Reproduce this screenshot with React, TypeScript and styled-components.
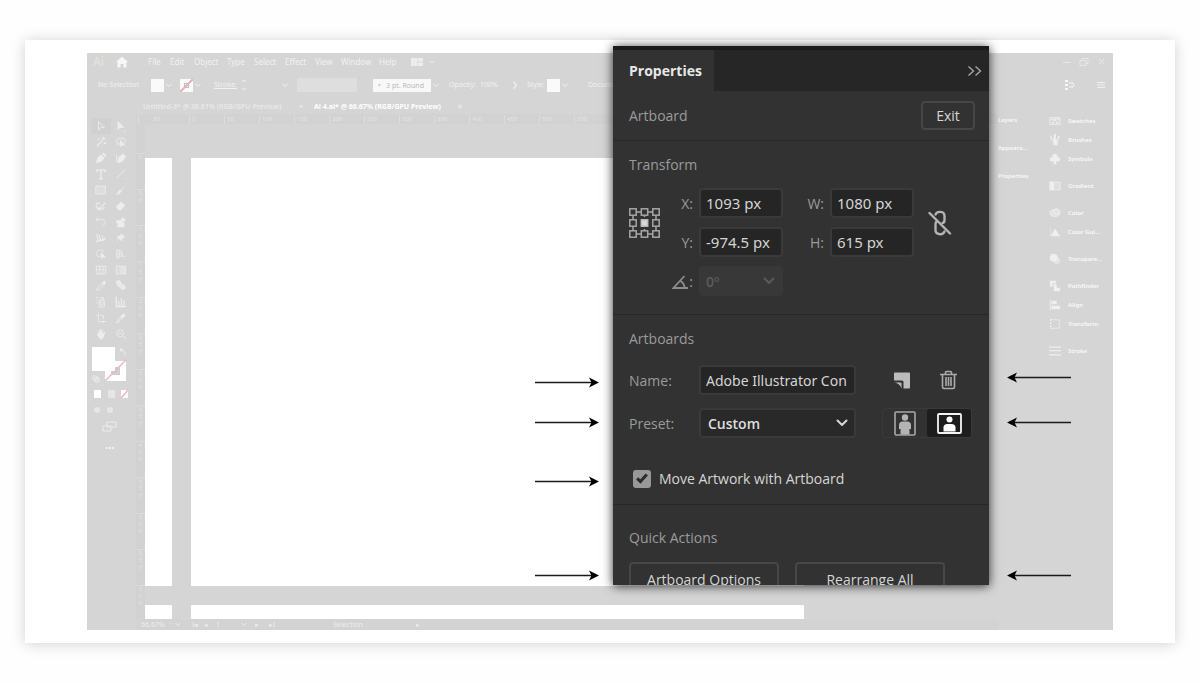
import React from "react";
import styled, { createGlobalStyle } from "styled-components";

const ui = '"Noto Sans", "Open Sans", sans-serif';
const panelFont = '"Open Sans", "Noto Sans", sans-serif';

const GlobalStyle = createGlobalStyle`
  *, *::before, *::after { box-sizing: border-box; }
  body { margin: 0; background: #fefefe; font-family: ${ui}; }
  button, input, select { font-family: inherit; margin: 0; }
`;

const Page = styled.main`
  padding: 40px 25px;
`;

const Card = styled.section`
  position: relative;
  padding: 13px 62px;
  background: #fff;
  box-shadow: 0 1px 14px rgba(0, 0, 0, 0.18);
`;

/* ---------- Faded application window ---------- */

const AppWindow = styled.div`
  display: flex;
  flex-direction: column;
  overflow: hidden;
  background: #d5d5d5;
  color: #f1f1f1;
  font-size: 8px;
  line-height: 10px;
  white-space: nowrap;
`;

const MenuBar = styled.nav`
  display: flex;
  align-items: center;
  height: 18px;
  padding: 0 6px;
`;

const Logo = styled.span`
  width: 23px;
  color: #e6e1da;
  font-size: 12px;
  font-weight: 500;
`;

const HomeSlot = styled.span`
  display: flex;
  width: 30px;
`;

const MenuItem = styled.a<{ $w: number }>`
  width: ${(p) => p.$w}px;
  padding-left: 2px;
  color: inherit;
  text-decoration: none;
`;

const Spacer = styled.span`
  flex: 1;
`;

const ControlBar = styled.div`
  display: grid;
  grid-template-columns: 53px 15px 14px 15px 19px 27px 41px 15px 76px 60px 16px 31px 32px 15px 20px 15px 26px 1fr 32px 16px;
  align-items: center;
  height: 28px;
  padding-left: 11px;
  font-size: 7px;
`;

const Swatch = styled.span`
  width: 13px;
  height: 13px;
  background: #fafafa;
`;

const NoneSwatch = styled(Swatch)`
  display: grid;
  place-items: center;
  background: linear-gradient(135deg, #fafafa 45%, #e9b3bb 45%, #e9b3bb 55%, #fafafa 55%);

  &::after {
    content: "";
    width: 5px;
    height: 5px;
    border: 1px solid #c9bcbe;
  }
`;

const FieldBlank = styled.span`
  width: 60px;
  height: 14px;
  background: #dedede;
`;

const BrushField = styled.span`
  width: 58px;
  height: 13px;
  padding-left: 5px;
  background: #f8f8f8;
  color: #b9b9b9;
  line-height: 13px;
`;

const Underlined = styled.span`
  text-decoration: underline;
`;

const TabsRow = styled.div`
  display: flex;
  align-items: center;
  gap: 11px;
  height: 15px;
  padding-left: 56px;
  font-size: 7px;
`;

const DocTab = styled.span<{ $active?: boolean }>`
  width: ${(p) => (p.$active ? 132 : 145)}px;
  color: ${(p) => (p.$active ? "#fff" : "#e9e9e9")};
  font-weight: ${(p) => (p.$active ? 700 : 600)};
`;

const Workspace = styled.div`
  display: flex;
`;

const ToolColumn = styled.aside`
  width: 49px;
  padding: 4px 4px 0;
`;

const ToolGrid = styled.div`
  display: grid;
  grid-template-columns: 20px 20px;
`;

const ToolButton = styled.button<{ $active?: boolean }>`
  display: flex;
  align-items: center;
  justify-content: center;
  height: 16px;
  padding: 0;
  border: 0;
  color: #ededed;
  background: ${(p) => (p.$active ? "#d0d0d0" : "none")};
`;

const ColourStack = styled.svg`
  display: block;
  margin-top: 4px;
`;

const DocumentArea = styled.div`
  flex: 1;
  min-width: 0;
`;

const HRuler = styled.div`
  display: flex;
  height: 10px;
  padding: 1px 0 0 2px;
  background: #d2d2d2;
  color: #e4e4e4;
  font-size: 6px;
  line-height: 8px;
  overflow: hidden;
`;

const HTick = styled.span<{ $first?: boolean }>`
  flex: none;
  width: ${(p) => (p.$first ? 51 : 35)}px;
  padding-left: ${(p) => (p.$first ? 14 : 2)}px;
  border-left: 1px solid #dcdcdc;
`;

const CanvasRow = styled.div`
  display: flex;
`;

const VRuler = styled.div`
  width: 9px;
  height: 495px;
  padding-top: 29px;
  overflow: hidden;
  background: #d2d2d2;
  color: #e2e2e2;
  font-size: 6px;
  line-height: 7px;
  text-align: center;
`;

const VTick = styled.div`
  height: 36px;
  border-top: 1px solid #dadada;
`;

const Canvas = styled.div`
  flex: 1;
  min-width: 0;
  display: grid;
  grid-template-columns: 27px minmax(0, 613px);
  grid-template-rows: 428px 14px;
  gap: 19px;
  align-content: start;
  padding-top: 34px;
`;

const Artboard = styled.div`
  background: #fff;
`;

const StatusBar = styled.div`
  display: grid;
  grid-template-columns: 34px 17px 12px 12px 25px 14px 14px 64px 83px 1fr;
  align-items: center;
  height: 11px;
  padding-left: 5px;
  background: #d3d3d3;
  color: #ededed;
  font-size: 7px;
`;

const DockLabels = styled.div`
  display: flex;
  flex-direction: column;
  gap: 18px;
  width: 47px;
  padding-top: 1px;
`;

const DockList = styled.div`
  display: flex;
  flex-direction: column;
  gap: 17px;
  width: 68px;
  padding-top: 2px;
`;

const DockGroup = styled.div`
  display: flex;
  flex-direction: column;
  gap: 9px;
`;

const DockItem = styled.div`
  display: flex;
  align-items: center;
  gap: 6px;
  height: 10px;
  color: #fafafa;
  font-size: 6px;
  font-weight: 600;
`;

const IconSlot = styled.span`
  display: flex;
  justify-content: center;
  width: 14px;
  margin-left: 3px;
  color: #efefef;
`;

/* ---------- Properties panel ---------- */

const PanelAnchor = styled.div`
  position: absolute;
  top: 6px;
  right: 186px;
  width: 376px;
`;

const Panel = styled.section`
  border-top: 4px solid #1b1b1b;
  background: #323232;
  box-shadow: 0 1px 10px rgba(0, 0, 0, 0.8);
  color: #d6d6d6;
  font-family: ${panelFont};
  font-size: 14px;
  line-height: 20px;
`;

const PanelTabs = styled.div`
  display: flex;
  align-items: stretch;
  height: 41px;
  background: #262626;
`;

const PanelTab = styled.button`
  width: 101px;
  padding: 0 0 0 16px;
  border: 0;
  background: #323232;
  color: #e8e8e8;
  font-family: "Open Sans", sans-serif;
  font-size: 14px;
  font-weight: 700;
  text-align: left;
`;

const CollapseButton = styled.button`
  display: flex;
  align-items: center;
  margin-left: auto;
  padding: 0 7px;
  border: 0;
  background: none;
  color: #a5a5a5;
`;

const PanelHeader = styled.header`
  display: flex;
  align-items: center;
  justify-content: space-between;
  height: 49px;
  padding: 0 14px 0 16px;
`;

const Heading = styled.h2`
  margin: 0;
  color: #9b9b9b;
  font-size: 14px;
  font-weight: 500;
  line-height: 20px;
`;

const OutlineButton = styled.button<{ $w: number; $h: number }>`
  flex: none;
  width: ${(p) => p.$w}px;
  height: ${(p) => p.$h}px;
  padding: 0;
  border: 2px solid #474747;
  border-radius: 4px;
  background: none;
  color: #d6d6d6;
  font-size: 14px;
  font-weight: 500;
`;

const Section = styled.section<{ $top?: number; $bottom?: number }>`
  padding: ${(p) => p.$top ?? 14}px 15px ${(p) => p.$bottom ?? 0}px 16px;
  border-top: 1px solid #272727;
`;

const TransformGrid = styled.div`
  display: grid;
  grid-template-columns: 31px 39px 84px 47px 84px 1fr;
  grid-auto-rows: 30px;
  row-gap: 9px;
  margin-top: 13px;
`;

const FieldLabel = styled.label`
  display: flex;
  align-items: center;
  justify-content: flex-end;
  padding: 2px 6px 0 0;
  color: #9b9b9b;
  font-weight: 500;
`;

const TextField = styled.input<{ $wide?: boolean }>`
  width: 100%;
  height: 30px;
  padding: 0 5px;
  border: 2px solid #3a3a3a;
  border-radius: 4px;
  background: #252525;
  color: #d4d4d4;
  font-family: ${ui};
  font-size: ${(p) => (p.$wide ? 14 : 15)}px;
`;

const TwoRows = styled.div<{ $end?: boolean }>`
  grid-row: 1 / span 2;
  grid-column: ${(p) => (p.$end ? 6 : 1)};
  display: flex;
  align-items: center;
  padding-left: ${(p) => (p.$end ? 14 : 0)}px;
`;

const SelectWrap = styled.div`
  position: relative;
  display: flex;
  width: 100%;

  svg {
    position: absolute;
    top: 11px;
    right: 8px;
    pointer-events: none;
  }
`;

const Select = styled.select`
  appearance: none;
  width: 100%;
  height: 30px;
  padding: 0 7px;
  border: 2px solid #3a3a3a;
  border-radius: 4px;
  background: #292929;
  color: #dedede;
  font-size: 14px;
  font-weight: 600;

  &:disabled {
    padding: 0 5px;
    border-color: #383838;
    background: #383838;
    color: #5b5b5b;
    opacity: 1;
  }
`;

const ArtboardGrid = styled.div`
  display: grid;
  grid-template-columns: 70px 157px 26px 90px;
  grid-auto-rows: 30px;
  row-gap: 13px;
  margin-top: 16px;
`;

const RowLabel = styled.label`
  display: flex;
  align-items: center;
  padding-top: 2px;
  color: #9b9b9b;
  font-weight: 500;
`;

const IconButton = styled.button<{ $active?: boolean }>`
  display: flex;
  align-items: center;
  justify-content: center;
  width: 40px;
  height: 28px;
  padding: 0;
  border: 0;
  border-radius: 3px;
  background: ${(p) => (p.$active ? "#1d1d1d" : "none")};
`;

const Actions = styled.div`
  grid-column: 4;
  display: flex;
  align-items: center;
  gap: 6px;
`;

const Orientation = styled(Actions)`
  gap: 0;
  border: 1px solid #3a3a3a;
  border-radius: 4px;

  ${IconButton} { width: 44px; }
`;

const CheckRow = styled.label`
  display: flex;
  align-items: center;
  gap: 8px;
  height: 20px;
  margin: 31px 0 1px 4px;
  font-weight: 500;
`;

const Checkbox = styled.input`
  appearance: none;
  display: grid;
  place-items: center;
  width: 18px;
  height: 18px;
  margin: 0;
  border-radius: 3px;
  background: #989898;

  &:checked::after {
    content: "";
    width: 6px;
    height: 11px;
    margin-bottom: 3px;
    border: solid #2b2b2b;
    border-width: 0 3px 3px 0;
    transform: rotate(42deg);
  }
`;

const QuickRow = styled.div`
  display: flex;
  gap: 16px;
  height: 23px;
  margin-top: 14px;
  overflow: hidden;
`;

const Pointer = styled.svg<{ $y: number; $right?: boolean }>`
  position: absolute;
  top: ${(p) => p.$y}px;
  left: ${(p) => (p.$right ? 393 : -79)}px;
`;

/* ---------- Drawings ---------- */

const Chevron = ({ w = 6, color = "currentColor", sw = 1 }: { w?: number; color?: string; sw?: number }) => (
  <svg width={w} height={w / 2 + 2} viewBox="0 0 12 8" fill="none" stroke={color} strokeWidth={(sw * 12) / w} strokeLinecap="round" strokeLinejoin="round">
    <path d="M1.5 1.5 6 6l4.500-4.500" />
  </svg>
);

const Glyph = ({ children, size = 14 }: { children: React.ReactNode; size?: number }) => (
  <svg width={size} height={size} viewBox="0 0 14 14" fill="none" stroke="currentColor" strokeWidth="1">
    {children}
  </svg>
);

const solid = { fill: "currentColor", stroke: "none" };

const tools: { name: string; art: React.ReactNode }[] = [
  { name: "Selection", art: <path d="M4 2v10l2.500-3H11z" /> },
  { name: "Direct selection", art: <path {...solid} d="M3 1v11l3-3h5zM12 12v2h-2z" /> },
  { name: "Magic wand", art: <path d="m2 12 7-7M10 1v3M8 3h4M4 3v2M3 4h2M11 7v3M10 8h3" strokeWidth="1.400" /> },
  { name: "Lasso", art: <><ellipse cx="7" cy="6" rx="5" ry="3.500" /><path {...solid} d="M6 4v9l2-2h4zM3 8l2 1-2 3z" /></> },
  { name: "Pen", art: <path {...solid} d="m1 13 2-7 4-3 4 4-3 4zM8 2l2-1 3 3-1 2z" /> },
  { name: "Curvature", art: <path {...solid} d="m3 13 1-7 5-4 4 3-4 6zM1 3c1 3 0 6 1 9l1-1C2 8 3 5 2 3z" /> },
  { name: "Type", art: <path d="M2 5V2.500h10V5M7 3v9.500M5 12.500h4" strokeWidth="1.600" /> },
  { name: "Line", art: <path d="m2 12 10-10M12 13l1.500-1.500" /> },
  { name: "Rectangle", art: <rect x="1" y="2.500" width="11" height="9" fill="#dcdcdc" /> },
  { name: "Paintbrush", art: <path {...solid} d="m13 1-6 6 1 1zM13 1 8 9 6 7zM6 7c-3 0-2 4-5 5 4 1 6-1 6-4z" /> },
  { name: "Shaper", art: <path d="M12 3 6 10l-2 1 1-3M6 4C1 2 0 7 3 10c3 2 7 1 8-2" strokeWidth="1.300" /> },
  { name: "Eraser", art: <path {...solid} d="m1 8 6-6 5 4-5 6H4z" /> },
  { name: "Rotate", art: <path d="M2 4h6c6 1 4 8 0 7M4 1 1 4l3 2" /> },
  { name: "Scale", art: <path {...solid} d="M2 5h5V3l2-2v2h3v3H9l2 2v5H3V8H1z" /> },
  { name: "Width", art: <path d="M2 2c0 5 2 5 2 9M5 3c0 5 2 4 2 8M1 12c3-5 9 1 11-5M9 4v5" strokeWidth="1.300" /> },
  { name: "Free transform", art: <path {...solid} d="m7 2 5 4-3 1-1 4-3-3-4 4 3-5-2-2 4-1z" /> },
  { name: "Shape builder", art: <><path d="M8 8c-4 4-8 1-6-3 2-4 8-3 8 0" /><path {...solid} d="M7 5v8l2-2h4z" /></> },
  { name: "Perspective", art: <path d="M2 2v10l6-3V4zM5 2.500v8M2 7h6M8 9l4 1" /> },
  { name: "Mesh", art: <path d="M1.500 2.500h11v9h-11zM1.500 7C5 4 9 9 12.500 7M5 2.500C7 6 4 8 5 11.500M9 2.500c2 3-1 6 0 9" /> },
  { name: "Gradient", art: <><path {...solid} opacity=".3" d="M2 3h4v8H2z" /><path d="M1.500 2.500h11v9h-11z" /><path {...solid} d="M6 3h6v8H6z" opacity=".6" /></> },
  { name: "Eyedropper", art: <><path d="m2 12 1-3 5-5 2 2-5 5z" /><path {...solid} d="m8 3 3-2 2 2-2 3z" /></> },
  { name: "Blend", art: <path {...solid} d="M1 3a3 3 0 0 1 6 0l5 4c2 3-2 6-4 4L2 6z" opacity=".8" /> },
  { name: "Symbol sprayer", art: <><rect x="5" y="5" width="6" height="8" rx="1" /><circle cx="8" cy="9" r="2" /><path d="M7 5V2h3v3M1 2h3M2 5h2M1 8h2" /></> },
  { name: "Column graph", art: <path d="M1.500 1v11.500H13M4.500 12V6M7.500 12V3M10.500 12V5" strokeWidth="1.500" /> },
  { name: "Artboard", art: <path d="M4 1v10h9M1 4h3M6 4h4v4M10 10v3" /> },
  { name: "Slice", art: <><path d="m2 13 2-5 6-6 2 2-6 6z" /><path {...solid} d="m6 6 4-4 2 2-4 4z" /></> },
  { name: "Hand", art: <path {...solid} d="M2 6l2 1V3l1-1 1 4V1h1l1 5V2h1v5l2-3 1 1-2 6-2 2H6L3 9z" /> },
  { name: "Zoom", art: <><circle cx="6" cy="6" r="4" /><path d="m9 9 4 4M4 6h4" /></> },
];

const dockArt: Record<string, React.ReactNode> = {
  Swatches: <><path d="M1 3h12v8H1z" /><path {...solid} d="M2 4h2v2H2zM5 4h3v3H5zM9 4h3v2H9zM3 8h3v2H3zM8 8h3v2H8z" /></>,
  Brushes: <path {...solid} d="M1 2l2 1 1 4h1L6 0h2v7h1l2-5 2 1-3 5v5H5V9L2 6z" />,
  Symbols: <path {...solid} d="M7 1a3 3 0 0 1 3 4c4-1 4 5 0 5-1 0-2-1-2-1l1 4H5l1-4c-2 2-5 1-5-1 0-3 2-3 3-3-1-2 1-4 3-4z" />,
  Gradient: <><path d="M1 2.500h12v9H1z" fill="#dedede" /><path {...solid} d="M1 2h5v10H1z" /></>,
  Color: <><ellipse cx="7" cy="7" rx="6" ry="4" fill="currentColor" fillOpacity=".5" /><circle cx="9" cy="5" r="3" /><circle cx="4" cy="7" r="1.500" fill="#d5d5d5" /></>,
  "Color Gui...": <><path d="M2 1v11" opacity=".5" /><path {...solid} d="M2 12 7 3l6 9z" /></>,
  "Transpare...": <><circle {...solid} cx="5.500" cy="5.500" r="4.500" /><circle {...solid} cx="9" cy="9" r="4" opacity=".6" /></>,
  Pathfinder: <><path {...solid} d="M1 1h7v3H4v4H1z" /><path {...solid} d="M5 5h4v4h4v4H6z" /></>,
  Align: <path {...solid} d="M1 1h1v12H1zM3 2h6v4H3zM3 8h10v4H3z" />,
  Transform: <path d="M2 2h10v10H2z" strokeDasharray="2 1.500" strokeWidth="1.500" />,
  Stroke: <path d="M0 2.500h14M0 6.500h14M0 11.500h14" strokeWidth="1.500" />,
};

const dock = [
  ["Swatches", "Brushes", "Symbols"],
  ["Gradient"],
  ["Color", "Color Gui..."],
  ["Transpare..."],
  ["Pathfinder", "Align", "Transform"],
  ["Stroke"],
];

const menus: [string, number][] = [
  ["File", 22], ["Edit", 24], ["Object", 33], ["Type", 27], ["Select", 31],
  ["Effect", 30], ["View", 26], ["Window", 38], ["Help", 34],
];

const ReferencePoint = () => (
  <svg width="31" height="30" viewBox="0 0 31 30" fill="none" stroke="#a6a6a6" strokeWidth="1.500" aria-label="Reference point">
    {[4, 15.5, 27].map((x) =>
      [4, 15, 26].map((y) => (
        <rect key={`${x}-${y}`} x={x - 3.2} y={y - 3.2} width="6.400" height="6.400" {...(x === 15.5 && y === 15 ? { fill: "#d8d8d8", stroke: "#bdbdbd" } : {})} />
      ))
    )}
    <path d="M7 4h5M19 4h5M7 26h5M19 26h5M4 7v5M4 18v5M27 7v5M27 18v5M15.500 7v2M15.500 21v2" />
  </svg>
);

const Unlink = () => (
  <svg width="24" height="26" viewBox="0 0 24 26" fill="none" stroke="#b4b4b4" strokeWidth="2.400" strokeLinecap="round" aria-label="Unlinked">
    <path d="M7.500 4.500C9 .8 16.500 .8 16.500 6v4.500M7.500 14.500V20c0 5 7.500 5.500 9 1.500M16.500 10.500q0 2-2 2.500M7.500 14q0-2 1.500-2.500" />
    <path d="M1.500 3 22 23.500" />
  </svg>
);

const leftArrows = [337, 377, 436, 530];
const rightArrows = [332, 377, 530];

const PointerArrow = ({ y, right }: { y: number; right?: boolean }) => (
  <Pointer $y={y - 6} $right={right} width="66" height="12" viewBox="0 0 66 12" aria-hidden="true">
    <g transform={right ? "translate(66 0) scale(-1 1)" : undefined}>
      <path d="M1 5.500h58" stroke="#1a1a1a" strokeWidth="1.300" />
      <path d="M65 5.500 55 10.500 57.500 5.500 55 .5z" fill="#000" />
    </g>
  </Pointer>
);

const NumberField = ({ id, label, value }: { id: string; label: string; value: string }) => (
  <>
    <FieldLabel htmlFor={id}>{label}</FieldLabel>
    <TextField id={id} defaultValue={value} />
  </>
);

export default function App() {
  return (
    <Page>
      <GlobalStyle />
      <Card>
        <AppWindow>
          <MenuBar>
            <Logo>Ai</Logo>
            <HomeSlot>
              <svg width="12" height="12" viewBox="0 0 12 12"><path fill="#f7f7f7" d="M6 .5 12 6h-1.500v5.500H7.500V8h-3v3.500h-3V6H0z" /></svg>
            </HomeSlot>
            {menus.map(([m, w]) => <MenuItem key={m} $w={w} href="#">{m}</MenuItem>)}
            <svg width="28" height="8" viewBox="0 0 28 8"><path fill="#ededed" d="M0 0h6v8H0zM6.500 0H12v3.500H6.500zM6.500 4.500H12V8H6.500z" /><path d="m19 3 2 2 2-2" fill="none" stroke="#eee" /></svg>
            <Spacer />
            <svg width="44" height="10" viewBox="0 0 44 10" fill="none" stroke="#e8e8e8"><path d="M0 5.500h8M17 3.500h6v5h-6zM19 3V1.500h6v5h-2M36 2l5 5M41 2l-5 5" /></svg>
          </MenuBar>
          <ControlBar>
            <span>No Selection</span>
            <Swatch />
            <Chevron />
            <NoneSwatch />
            <Chevron />
            <Underlined>Stroke:</Underlined>
            <svg width="6" height="12" viewBox="0 0 6 12" fill="none" stroke="currentColor"><path d="m1 3 2-2 2 2M1 9l2 2 2-2" /></svg>
            <Chevron />
            <FieldBlank />
            <BrushField>• &nbsp; 3 pt. Round</BrushField>
            <Chevron />
            <span>Opacity:</span>
            <span>100%</span>
            <span>❯</span>
            <span>Style:</span>
            <Swatch />
            <Chevron />
            <span>Document Setup</span>
            <svg width="10" height="10" viewBox="0 0 10 10" fill="none" stroke="#f7f7f7"><path d="M0 0h3v2H0zM0 4h3v2H0zM0 8h3v2H0z" fill="#f7f7f7" stroke="none" /><path d="M4 3h4l1 2-1 2H4" /></svg>
            <svg width="8" height="8" viewBox="0 0 8 8" stroke="#f0f0f0"><path d="M0 1.500h8M0 4h8M0 6.500h8" /></svg>
          </ControlBar>
          <TabsRow>
            <DocTab>Untitled-3* @ 38.81% (RGB/GPU Preview)</DocTab>
            <span>×</span>
            <DocTab $active>Ai 4.ai* @ 66.67% (RGB/GPU Preview)</DocTab>
            <span>✕</span>
          </TabsRow>
          <Workspace>
            <ToolColumn>
              <ToolGrid>
                {tools.map((t, i) => (
                  <ToolButton key={t.name} $active={i === 0} aria-label={t.name}><Glyph size={12}>{t.art}</Glyph></ToolButton>
                ))}
              </ToolGrid>
              <ColourStack width="42" height="112" viewBox="0 0 42 112" fill="none">
                <path d="M14 15h21v20H14z" fill="#fff" /><path d="M20 21h9v8h-9z" fill="#cfcfcf" />
                <path d="M14 35 35 14" stroke="#f0b5bd" strokeWidth="1.500" />
                <path d="M1 1h23v24H1z" fill="#fff" />
                <path d="M29 4c4-1 5 1 5 5M31 2l-2 2 2 2" stroke="#f2f2f2" />
                <path d="M2 30h4v4H2zM4 32h4v4H4z" stroke="#ececec" />
                <path d="M3 44h7v8H3z" fill="#fff" /><path d="M17 44h7v8h-7z" fill="#e6e6e6" /><path d="M30 44h7v8h-7z" fill="#fff" />
                <path d="m30 52 7-8" stroke="#f0b5bd" strokeWidth="1.500" />
                <circle cx="6" cy="64" r="3" fill="#e6e6e6" /><circle cx="19" cy="64" r="3" fill="#e6e6e6" />
                <path d="M16 76h9v5h-9zM12 80h8v5h-8z" stroke="#ececec" />
                <path d="M15 102h2M18 102h2M21 102h2" stroke="#f2f2f2" strokeWidth="2" />
              </ColourStack>
            </ToolColumn>
            <DocumentArea>
              <HRuler>
                {["50", "0", "50", "100", "150", "200", "250", "300", "350", "400", "450", "500", "550"].map((n, i) => (
                  <HTick key={i} $first={i === 0}>{n}</HTick>
                ))}
              </HRuler>
              <CanvasRow>
                <VRuler>
                  {["0", "50", "100", "150", "200", "250", "300", "350", "400", "450", "500", "550", "600"].map((n) => (
                    <VTick key={n}>{n.split("").map((d, i) => <div key={i}>{d}</div>)}</VTick>
                  ))}
                </VRuler>
                <Canvas>
                  <Artboard /><Artboard /><Artboard /><Artboard />
                </Canvas>
              </CanvasRow>
              <StatusBar>
                <span>66.67%</span><Chevron />
                <span>I◂</span><span>◂</span><span>1</span><Chevron />
                <span>▸</span><span>▸I</span><span>Selection</span><span>▸</span>
              </StatusBar>
            </DocumentArea>
            <DockLabels>
              {["Layers", "Appeara...", "Properties"].map((n) => (
                <DockItem key={n}>{n}</DockItem>
              ))}
            </DockLabels>
            <DockList>
              {dock.map((group) => (
                <DockGroup key={group[0]}>
                  {group.map((n) => (
                    <DockItem key={n}>
                      <IconSlot><Glyph size={12}>{dockArt[n]}</Glyph></IconSlot>
                      {n}
                    </DockItem>
                  ))}
                </DockGroup>
              ))}
            </DockList>
          </Workspace>
        </AppWindow>

        <PanelAnchor>
          <Panel>
            <PanelTabs>
              <PanelTab>Properties</PanelTab>
              <CollapseButton aria-label="Collapse panel">
                <svg width="15" height="12" viewBox="0 0 15 12" fill="none" stroke="currentColor" strokeWidth="1.400"><path d="m1.500 1.500 5 4.500-5 4.500M8.500 1.500l5 4.500-5 4.500" /></svg>
              </CollapseButton>
            </PanelTabs>
            <PanelHeader>
              <Heading>Artboard</Heading>
              <OutlineButton $w={54} $h={29}>Exit</OutlineButton>
            </PanelHeader>

            <Section $bottom={18}>
              <Heading>Transform</Heading>
              <TransformGrid>
                <TwoRows><ReferencePoint /></TwoRows>
                <NumberField id="x" label="X:" value="1093 px" />
                <NumberField id="w" label="W:" value="1080 px" />
                <TwoRows $end><Unlink /></TwoRows>
                <NumberField id="y" label="Y:" value="-974.5 px" />
                <NumberField id="h" label="H:" value="615 px" />
                <span />
                <FieldLabel htmlFor="angle" aria-label="Angle">
                  <svg width="17" height="15" viewBox="0 0 17 15" fill="none" stroke="#8c8c8c" strokeWidth="1.800"><path d="M12.500 1 1.500 13H16M8.500 6c2.500 1.500 4 4 4 7" /></svg>:
                </FieldLabel>
                <SelectWrap>
                  <Select id="angle" disabled><option>0º</option></Select>
                  <Chevron w={12} color="#5b5b5b" sw={2} />
                </SelectWrap>
              </TransformGrid>
            </Section>

            <Section $bottom={14}>
              <Heading>Artboards</Heading>
              <ArtboardGrid>
                <RowLabel htmlFor="name">Name:</RowLabel>
                <TextField id="name" $wide defaultValue="Adobe Illustrator Con" />
                <Actions>
                  <IconButton aria-label="New artboard">
                    <svg width="16" height="17" viewBox="0 0 16 17" fill="#bcbcbc"><path d="M0 1.500Q0 .5 1 .5h14q1 0 1 1V15.500q0 1-1 1H9.500V10q0-1.500-1.500-1.500H0z" /><path d="M.5 10.500H6.500q1 0 1 1v5C6.500 13 4 11 .5 10.500z" /></svg>
                  </IconButton>
                  <IconButton aria-label="Delete artboard">
                    <svg width="17" height="20" viewBox="0 0 17 20" fill="none" stroke="#ababab" strokeWidth="1.600"><path d="M0 4.500h17M5.500 4V2.500q0-1 1-1h4q1 0 1 1V4M2.500 5v12q0 1.500 1.500 1.500h9q1.500 0 1.500-1.500V5M6 7v9M8.500 7v9M11 7v9" /></svg>
                  </IconButton>
                </Actions>
                <RowLabel htmlFor="preset">Preset:</RowLabel>
                <SelectWrap>
                  <Select id="preset"><option>Custom</option></Select>
                  <Chevron w={12} color="#d6d6d6" sw={2} />
                </SelectWrap>
                <Orientation>
                  <IconButton aria-label="Portrait">
                    <svg width="22" height="25" viewBox="0 0 22 25"><rect x="1" y="1" width="20" height="23" rx="1" fill="none" stroke="#a8a8a8" strokeWidth="1.600" /><circle cx="11" cy="6.500" r="3.200" fill="#b4b4b4" /><path fill="#b4b4b4" d="M5 14q0-3.500 4-3.500h4q4 0 4 3.500v4h-1.500v5.500h-9V18H5z" /></svg>
                  </IconButton>
                  <IconButton $active aria-label="Landscape">
                    <svg width="25" height="21" viewBox="0 0 25 21"><rect x="1" y="1" width="23" height="19" rx="1" fill="none" stroke="#f4f4f4" strokeWidth="1.800" /><circle cx="12.500" cy="6.500" r="3" fill="#fff" /><path fill="#fff" d="M6.500 18.500v-4q0-3.500 4-3.500h4q4 0 4 3.500v4z" /></svg>
                  </IconButton>
                </Orientation>
              </ArtboardGrid>
              <CheckRow>
                <Checkbox type="checkbox" defaultChecked />
                Move Artwork with Artboard
              </CheckRow>
            </Section>

            <Section $top={23}>
              <Heading>Quick Actions</Heading>
              <QuickRow>
                <OutlineButton $w={150} $h={34}>Artboard Options</OutlineButton>
                <OutlineButton $w={150} $h={34}>Rearrange All</OutlineButton>
              </QuickRow>
            </Section>
          </Panel>
          {leftArrows.map((y) => <PointerArrow key={`l${y}`} y={y} />)}
          {rightArrows.map((y) => <PointerArrow key={`r${y}`} y={y} right />)}
        </PanelAnchor>
      </Card>
    </Page>
  );
}
